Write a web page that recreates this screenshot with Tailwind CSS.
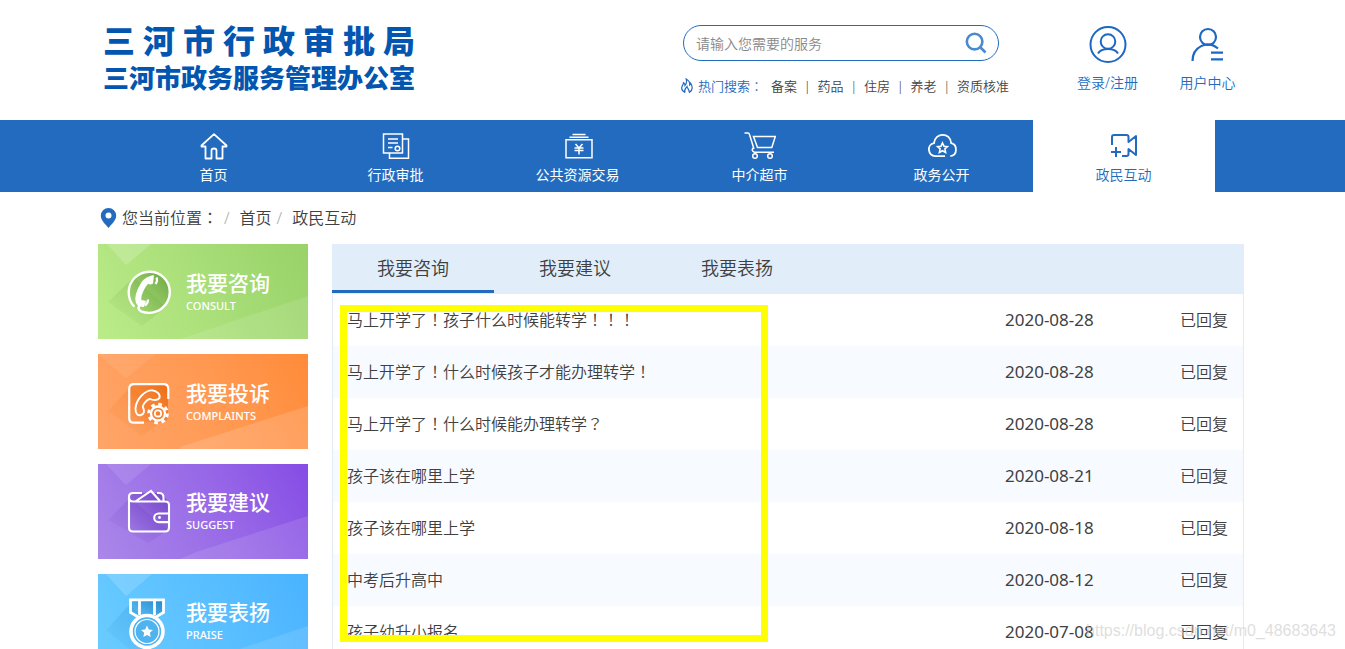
<!DOCTYPE html>
<html lang="zh-CN">
<head>
<meta charset="utf-8">
<meta name="viewport" content="width=device-width, initial-scale=1">
<title>三河市行政审批局</title>
<script src="https://cdn.jsdelivr.net/npm/@tailwindcss/browser@4"></script>
</head>
<body class="relative h-screen overflow-hidden bg-white font-['Noto_Sans','Noto_Sans_CJK_SC',sans-serif] text-[#404040]">
<header class="mx-auto flex h-[120px] w-full max-w-[1149px] items-start pr-[11px] pl-[5px]">
  <h1 class="w-[312px] shrink-0 pt-5 font-black text-[#0356b0]">
    <span class="flex justify-between text-[32px] leading-[42px]"><span>三</span><span>河</span><span>市</span><span>行</span><span>政</span><span>审</span><span>批</span><span>局</span></span>
    <span class="block text-[26px] leading-[32px] whitespace-nowrap">三河市政务服务管理办公室</span>
  </h1>
  <div class="ml-auto w-[328px] shrink-0 pt-[25px]">
    <form class="ml-[2px] flex h-9 w-[316px] items-center rounded-full border border-[#236bbe] pr-[11px] pl-3">
      <input type="text" aria-label="搜索服务" placeholder="请输入您需要的服务" class="min-w-0 flex-1 text-[14px] font-[350] outline-none placeholder:text-[#888]">
      <button type="button" aria-label="搜索">
        <svg class="block size-[22px]" viewBox="0 0 22 22" fill="none" stroke="#4a8bd0" stroke-width="2.6"><circle cx="9.6" cy="9.6" r="7.8"/><path d="M15 15l5.5 5.5"/></svg>
      </button>
    </form>
    <div class="mt-4 flex items-center text-[13px] leading-[18px] font-[350] whitespace-nowrap">
      <svg class="mr-[5px] h-4 w-3 shrink-0" viewBox="0 0 12 16" fill="none" stroke="#236bbe" stroke-width="1.2"><path d="M4 14.5C1 13 .2 10.500 1.200 8c.7-1.600 1.300-2.200 1.300-3.300C3.500 5.500 4 6.500 4 7.500 5.500 5.500 6 3.500 5.200 1 8 2.500 9 4.500 8.700 7c.6-.4.900-.9 1-1.600 1.800 2.600 2.600 7-1.500 9.200"/><path d="M4 14.500c-1.400-2.500.3-3.700 2-6 .3 1.800 2.800 3.500 2.200 6"/></svg>
      <span class="w-[73px] text-[#236bbe]">热门搜索<span lang="zh-TW" class="font-['Noto_Sans','Noto_Sans_CJK_TC',sans-serif]">：</span></span>
      <nav class="flex flex-1 justify-between text-[#444]">
        <a href="#">备案</a><span>|</span><a href="#">药品</a><span>|</span><a href="#">住房</a><span>|</span><a href="#">养老</a><span>|</span><a href="#">资质核准</a>
      </nav>
    </div>
  </div>
  <a href="#" class="ml-[67px] flex w-[63px] shrink-0 flex-col items-center pt-6 text-[14px] leading-[20px] font-[350] whitespace-nowrap text-[#236bbe]">
    <svg class="mb-[9px] size-10" viewBox="0 0 40 40" fill="none" stroke="#1d68c2" stroke-width="2"><circle cx="20" cy="20.500" r="17.500"/><circle cx="20" cy="17.500" r="7.300"/><path d="M10 29.500c3.500-6 16.500-6 20 0"/></svg>
    登录/注册
  </a>
  <a href="#" class="ml-10 flex w-[57px] shrink-0 flex-col items-center pt-6 text-[14px] leading-[20px] font-[350] whitespace-nowrap text-[#236bbe]">
    <svg class="mb-[9px] size-10" viewBox="0 0 40 40" fill="none" stroke="#1d68c2" stroke-width="2.200"><circle cx="20" cy="13" r="8"/><path d="M4.500 37C4.500 23 19 15.500 30 24.500M23 28.700h12M23 35.300h12"/></svg>
    用户中心
  </a>
</header>

<nav class="bg-[#236bbe]">
  <ul class="mx-auto flex h-[72px] w-full max-w-[1149px] pr-[32px] pl-[25px] text-[14px] leading-[20px] text-white">
    <li class="flex-1"><a href="#" class="flex h-full flex-col items-center pt-[10px] pr-px">
      <svg class="mb-[3px] size-8" viewBox="0 0 32 32" fill="none" stroke="currentColor" stroke-width="1.800" stroke-linejoin="round"><path d="M16 4.200L3.500 15.500v1h4v12h6v-8q0-2 2.500-2t2.500 2v8h6v-12h4v-1z"/></svg>首页</a></li>
    <li class="flex-1"><a href="#" class="flex h-full flex-col items-center pt-[10px] pr-px">
      <svg class="mb-[3px] size-8" viewBox="0 0 32 32" fill="none" stroke="currentColor" stroke-width="1.500"><path d="M3.500 4h19v19h-19zM22.500 9h6v19.300h-19V23M8 9h10M8 13h10M8 17.500h4.500"/><circle cx="17.500" cy="18.500" r="2.300"/></svg>行政审批</a></li>
    <li class="flex-1"><a href="#" class="flex h-full flex-col items-center pt-[10px] pr-px">
      <svg class="mb-[3px] size-8" viewBox="0 0 32 32" fill="none" stroke="currentColor" stroke-width="1.500"><path d="M4 9.700h26v18H4zM7.500 7.300h19M10.500 4.500h13M13.500 14l3.500 4 3.500-4M12.500 18h9M12.500 20.500h9M17 18v6.500"/></svg>公共资源交易</a></li>
    <li class="flex-1"><a href="#" class="flex h-full flex-col items-center pt-[10px] pr-px">
      <svg class="mb-[3px] size-8" viewBox="0 0 32 32" fill="none" stroke="currentColor" stroke-width="1.500"><path d="M.5 3H4q1 0 1.500 1.500L10 19M9.500 6.500h21.800l-3.500 11H13.500zM9 18q-2 3 1.500 4.200h19.500"/><circle cx="11" cy="26" r="2.300"/><circle cx="26" cy="26" r="2.300"/></svg>中介超市</a></li>
    <li class="flex-1"><a href="#" class="flex h-full flex-col items-center pt-[10px] pr-px">
      <svg class="mb-[3px] size-8" viewBox="0 0 32 32" fill="none" stroke="currentColor" stroke-width="1.800"><path d="M19 26.200H9.500C1.500 25.500.5 14.500 8 13.200 9 2 24.500 2 25.200 13.200c6.500 1.600 6.500 12-.9 13"/><path d="M16.500 13l1.500 3.200 3.400.4-2.500 2.300.7 3.500-3.100-1.700-3.100 1.700.7-3.500-2.500-2.300 3.400-.4z" stroke-width="1.600"/></svg>政务公开</a></li>
    <li class="flex-1 bg-white text-[#236bbe]"><a href="#" aria-current="page" class="flex h-full flex-col items-center pt-[10px] pr-px font-[350]">
      <svg class="mb-[3px] size-8" viewBox="0 0 32 32" fill="none" stroke="currentColor" stroke-width="2" stroke-linejoin="round"><path d="M4 15V7q0-2 2-2h12.500q2 0 2 2v5l7.500-6v19l-7.500-6v5q0 2-2 2H14M3 22h10M8 17v10"/></svg>政民互动</a></li>
  </ul>
</nav>

<div class="mx-auto w-full max-w-[1149px] pr-[3px]">
  <nav aria-label="面包屑" class="flex h-[52px] items-center pl-[2px] text-[16px] leading-[24px] font-[350]">
    <svg class="mr-[5px] h-5 w-[17px]" viewBox="0 0 17 20" fill="#236bbe"><path fill-rule="evenodd" d="M8.500 0a7.700 7.700 0 0 1 7.700 7.700C16.200 12.500 11 16.500 8.500 20 6 16.500.8 12.500.8 7.700A7.700 7.700 0 0 1 8.500 0zm0 4.600a3 3 0 1 0 0 6 3 3 0 0 0 0-6z"/></svg>
    <span>您当前位置<span lang="zh-TW" class="font-['Noto_Sans','Noto_Sans_CJK_TC',sans-serif]">：</span></span><span class="mx-[6px] text-[#aaa]">/</span><a href="#" class="ml-1">首页</a><span class="mr-[10px] ml-[5px] text-[#aaa]">/</span><span>政民互动</span>
  </nav>

  <div class="flex items-start gap-6">
    <aside class="flex w-[210px] shrink-0 flex-col gap-[15px] text-white">
      <a href="#" class="relative block h-[95px] overflow-hidden bg-linear-60 from-[#bbec89] via-[#a6dc76] via-60% to-[#98d268] pt-[25px] pl-[88px]">
        <svg class="absolute inset-0 size-full" viewBox="0 0 210 95" preserveAspectRatio="xMinYMin slice" fill="none" stroke="#fff">
          <defs><linearGradient id="g1" x1="1" y1="0" x2="0" y2="1"><stop offset="0" stop-color="#6ea843"/><stop offset="1" stop-color="#6ea843" stop-opacity="0"/></linearGradient></defs>
          <g stroke="none"><path d="M9 0h44L28 21z" fill="#fff" fill-opacity=".18"/><path d="M82 95L210 52v43z" fill="#fff" fill-opacity=".11"/><path d="M36 33L10 58l34 24 24-19z" fill="url(#g1)" fill-opacity=".35"/><circle cx="51" cy="48" r="20" fill="url(#g1)"/></g>
          <path d="M36.300 62.700A20.800 20.800 0 0 1 65.700 33.300A20.800 20.800 0 0 1 43.200 67.300Q38.500 65 42 61" stroke-width="2.400"/>
          <path d="M53 35c-7 1-17 19-10.500 25.500" stroke-width="6"/><path d="M50 34q3-3.500 6-2.500l-1 8q-3 2-5 0zM44 56l4 1-2 6q-4 .5-6-3z" fill="#fff" stroke="none"/><path d="M58.500 33.500q1.500 3-1 6.500M50 55.500q0 4-3 6" stroke-width="2.200"/>
        </svg>
        <span class="relative block text-[21px] leading-[28px] font-medium">我要咨询</span><span class="relative block text-[11px] leading-[17px] font-medium">CONSULT</span>
      </a>
      <a href="#" class="relative block h-[95px] overflow-hidden bg-linear-60 from-[#ffa569] via-[#ff9850] via-60% to-[#ff8b38] pt-[25px] pl-[88px]">
        <svg class="absolute inset-0 size-full" viewBox="0 0 210 95" preserveAspectRatio="xMinYMin slice" fill="none" stroke="#fff">
          <defs><linearGradient id="g2" x1="1" y1="0" x2="0" y2="1"><stop offset="0" stop-color="#ec6c12"/><stop offset="1" stop-color="#ec6c12" stop-opacity="0"/></linearGradient></defs>
          <g stroke="none"><path d="M0 0h58L28 24z" fill="#fff" fill-opacity=".08"/><path d="M82 93L210 52v43H82z" fill="#fff" fill-opacity=".14"/><path d="M33 32L10 57l34 25 24-17z" fill="url(#g2)" fill-opacity=".35"/><rect x="31" y="30" width="39" height="38" rx="5" fill="url(#g2)"/></g>
          <path d="M46 68.700H36q-4.800 0-4.800-4.800V35q0-4.800 4.800-4.800h29.500q4.800 0 4.800 4.800v10" stroke-width="2.200"/>
          <path d="M55 36.500c-8-1-17 9-17.500 18-.2 6 3 7.500 5.500 6.500 3-1 4-4 2-7.500-1-2 4-8.500 7-8.500 3 1.500 8 1.500 9.500-1 1-4-3-7-6.500-7.500z" stroke-width="1.900"/>
          <circle cx="60" cy="59.500" r="7" stroke-width="2.300"/><circle cx="60" cy="59.500" r="9.300" stroke-width="3" stroke-dasharray="3.650 3.650"/><circle cx="60" cy="59.500" r="3.200" stroke-width="1.700"/>
        </svg>
        <span class="relative block text-[21px] leading-[28px] font-medium">我要投诉</span><span class="relative block text-[11px] leading-[17px] font-medium">COMPLAINTS</span>
      </a>
      <a href="#" class="relative block h-[95px] overflow-hidden bg-linear-60 from-[#aa87e9] via-[#9767e7] via-60% to-[#864be5] pt-[24px] pl-[88px]">
        <svg class="absolute inset-0 size-full" viewBox="0 0 210 95" preserveAspectRatio="xMinYMin slice" fill="none" stroke="#fff">
          <defs><linearGradient id="g3" x1="1" y1="0" x2="0" y2="1"><stop offset="0" stop-color="#6b3cc0"/><stop offset="1" stop-color="#6b3cc0" stop-opacity="0"/></linearGradient></defs>
          <g stroke="none"><path d="M8 0h45L28 21z" fill="#fff" fill-opacity=".1"/><path d="M98 88L210 52v43H82z" fill="#fff" fill-opacity=".11"/><path d="M32 34L10 56l40 23 20-13z" fill="url(#g3)" fill-opacity=".35"/><path d="M32 29h32l6 9v28H32z" fill="url(#g3)" fill-opacity=".8"/></g>
          <path d="M31 33v30.500q0 4 4 4h32q4 0 4-4V41q0-3.500-4-3.500H35q-4 0-4-4.500 0-4 4-4h9M59 29h2q4.500 0 4.500 4.500v4M38 37l15-10 9 10M71 49.500H60.500a4.300 4.300 0 0 0 0 8.600H71" stroke-width="2.100"/><circle cx="61.500" cy="53.500" r="1.400" fill="#fff" stroke="none"/>
        </svg>
        <span class="relative block text-[21px] leading-[28px] font-medium">我要建议</span><span class="relative block text-[11px] leading-[17px] font-medium">SUGGEST</span>
      </a>
      <a href="#" class="relative block h-[95px] overflow-hidden bg-linear-60 from-[#6bcdff] via-[#58beff] via-60% to-[#4ab3ff] pt-[24px] pl-[88px]">
        <svg class="absolute inset-0 size-full" viewBox="0 0 210 95" preserveAspectRatio="xMinYMin slice" fill="none" stroke="#fff">
          <defs><linearGradient id="g4" x1="1" y1="0" x2="0" y2="1"><stop offset="0" stop-color="#268acb"/><stop offset="1" stop-color="#268acb" stop-opacity="0"/></linearGradient></defs>
          <g stroke="none"><path d="M8 0h46L28 22z" fill="#fff" fill-opacity=".16"/><path d="M82 95L210 52v43z" fill="#fff" fill-opacity=".11"/><path d="M32 30L8 56l34 28 24-18z" fill="url(#g4)" fill-opacity=".35"/><path d="M33 26h32v12l-8 6H42l-9-6z" fill="url(#g4)"/></g>
          <path d="M41 43.500l-8.500-5V25.800h33v12.700l-8.500 5M41.500 26v15M56.500 26v15" stroke-width="2.800"/>
          <circle cx="49" cy="57.500" r="16" fill="#4fb3f0" stroke-width="3.600"/><circle cx="49" cy="57.500" r="12" stroke-width="1.200"/><path d="M49 51.500l1.800 4 4.200.5-3.200 2.800.9 4.300-3.700-2.200-3.700 2.200.9-4.300L43 56l4.200-.5z" fill="#fff" stroke="none"/>
        </svg>
        <span class="relative block text-[21px] leading-[28px] font-medium">我要表扬</span><span class="relative block text-[11px] leading-[17px] font-medium">PRAISE</span>
      </a>
    </aside>

    <main class="relative min-w-0 flex-1">
      <div role="tablist" class="flex h-[50px] bg-[#e1eefa] text-[18px] font-[350]">
        <button role="tab" aria-selected="true" class="h-[49px] w-[162px] border-b-3 border-[#236bbe] pt-[2px]">我要咨询</button>
        <button role="tab" aria-selected="false" class="h-[49px] w-[162px] border-b-3 border-transparent pt-[2px]">我要建议</button>
        <button role="tab" aria-selected="false" class="h-[49px] w-[162px] border-b-3 border-transparent pt-[2px]">我要表扬</button>
      </div>
      <div class="border-x border-[#e1ecf7]">
        <table class="w-full text-left text-[16px] leading-[24px] font-[350]">
          <tbody>
            <tr class="h-[52px]"><td class="pl-[14px]"><a href="#">马上开学了<span lang="zh-TW" class="font-['Noto_Sans','Noto_Sans_CJK_TC',sans-serif]">！</span>孩子什么时候能转学<span lang="zh-TW" class="font-['Noto_Sans','Noto_Sans_CJK_TC',sans-serif]">！！！</span></a></td><td class="w-[175px] text-[17px] font-normal">2020-08-28</td><td class="w-[63px]">已回复</td></tr>
            <tr class="h-[52px] bg-[#f7fbff]"><td class="pl-[14px]"><a href="#">马上开学了<span lang="zh-TW" class="font-['Noto_Sans','Noto_Sans_CJK_TC',sans-serif]">！</span>什么时候孩子才能办理转学<span lang="zh-TW" class="font-['Noto_Sans','Noto_Sans_CJK_TC',sans-serif]">！</span></a></td><td class="text-[17px] font-normal">2020-08-28</td><td>已回复</td></tr>
            <tr class="h-[52px]"><td class="pl-[14px]"><a href="#">马上开学了<span lang="zh-TW" class="font-['Noto_Sans','Noto_Sans_CJK_TC',sans-serif]">！</span>什么时候能办理转学<span lang="zh-TW" class="font-['Noto_Sans','Noto_Sans_CJK_TC',sans-serif]">？</span></a></td><td class="text-[17px] font-normal">2020-08-28</td><td>已回复</td></tr>
            <tr class="h-[52px] bg-[#f7fbff]"><td class="pl-[14px]"><a href="#">孩子该在哪里上学</a></td><td class="text-[17px] font-normal">2020-08-21</td><td>已回复</td></tr>
            <tr class="h-[52px]"><td class="pl-[14px]"><a href="#">孩子该在哪里上学</a></td><td class="text-[17px] font-normal">2020-08-18</td><td>已回复</td></tr>
            <tr class="h-[52px] bg-[#f7fbff]"><td class="pl-[14px]"><a href="#">中考后升高中</a></td><td class="text-[17px] font-normal">2020-08-12</td><td>已回复</td></tr>
            <tr class="h-[52px]"><td class="pl-[14px]"><a href="#">孩子幼升小报名</a></td><td class="text-[17px] font-normal">2020-07-08</td><td>已回复</td></tr>
          </tbody>
        </table>
      </div>
      <!-- highlight frame over the question titles -->
      <div class="pointer-events-none absolute top-[61px] left-2 h-[337px] w-[428px] border-7 border-[#ff0]"></div>
    </main>
  </div>
</div>
<div class="pointer-events-none absolute right-[9px] bottom-[8px] font-['Liberation_Sans',sans-serif] text-[16px] leading-[20px] text-[#c8c8c8]/60">https://blog.csdn.net/m0_48683643</div>
</body>
</html>
